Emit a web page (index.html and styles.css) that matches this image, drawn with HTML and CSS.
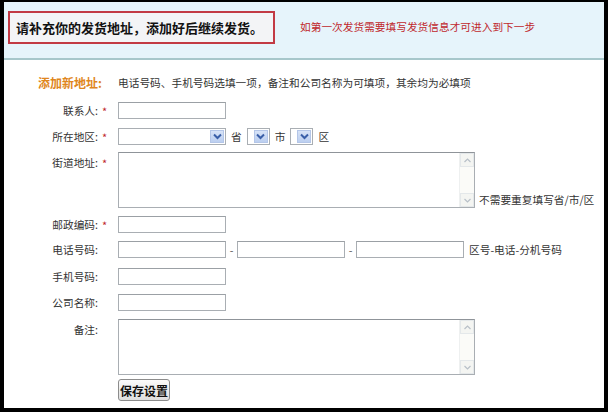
FILE: index.html
```html
<!DOCTYPE html>
<html lang="zh-CN">
<head>
<meta charset="utf-8">
<title>发货地址</title>
<link rel="stylesheet" href="styles.css">
</head>
<body>
<div class="frame">
  <div class="header">
    <div class="notice">请补充你的发货地址，添加好后继续发货。</div>
    <div class="hint">如第一次发货需要填写发货信息才可进入到下一步</div>
  </div>
  <div class="form">
    <div class="row head-row">
      <div class="label heading">添加新地址:</div>
      <div class="star"></div>
      <div class="field desc">电话号码、手机号码选填一项，备注和公司名称为可填项，其余均为必填项</div>
    </div>

    <div class="row gap9">
      <div class="label">联系人:</div>
      <div class="star">*</div>
      <div class="field"><input class="text" type="text"></div>
    </div>

    <div class="row gap7">
      <div class="label">所在地区:</div>
      <div class="star">*</div>
      <div class="field">
        <span class="select wide"><span class="arrow"><svg width="9" height="7" viewBox="0 0 9 7"><path d="M1 1.5 L4.5 5 L8 1.5" fill="none" stroke="#3a5fa8" stroke-width="2"/></svg></span></span>
        <span class="unit">省</span>
        <span class="select small"><span class="arrow"><svg width="9" height="7" viewBox="0 0 9 7"><path d="M1 1.5 L4.5 5 L8 1.5" fill="none" stroke="#3a5fa8" stroke-width="2"/></svg></span></span>
        <span class="unit">市</span>
        <span class="select small"><span class="arrow"><svg width="9" height="7" viewBox="0 0 9 7"><path d="M1 1.5 L4.5 5 L8 1.5" fill="none" stroke="#3a5fa8" stroke-width="2"/></svg></span></span>
        <span class="unit">区</span>
      </div>
    </div>

    <div class="row top">
      <div class="label">街道地址:</div>
      <div class="star">*</div>
      <div class="field bottom">
        <div class="area">
          <div class="area-body"></div>
          <div class="scroll">
            <span class="sbtn"><svg width="7" height="5" viewBox="0 0 7 5"><path d="M0.5 4 L3.5 1 L6.5 4" fill="none" stroke="#b8c0c8" stroke-width="1.2"/></svg></span>
            <span class="sbtn"><svg width="7" height="5" viewBox="0 0 7 5"><path d="M0.5 1 L3.5 4 L6.5 1" fill="none" stroke="#b8c0c8" stroke-width="1.2"/></svg></span>
          </div>
        </div>
        <span class="note">不需要重复填写省/市/区</span>
      </div>
    </div>

    <div class="row">
      <div class="label">邮政编码:</div>
      <div class="star">*</div>
      <div class="field"><input class="text" type="text"></div>
    </div>

    <div class="row gap10">
      <div class="label">电话号码:</div>
      <div class="star"></div>
      <div class="field">
        <input class="text" type="text">
        <span class="dash">-</span>
        <input class="text" type="text">
        <span class="dash">-</span>
        <input class="text" type="text">
        <span class="note2">区号-电话-分机号码</span>
      </div>
    </div>

    <div class="row gap9">
      <div class="label">手机号码:</div>
      <div class="star"></div>
      <div class="field"><input class="text" type="text"></div>
    </div>

    <div class="row">
      <div class="label">公司名称:</div>
      <div class="star"></div>
      <div class="field"><input class="text" type="text"></div>
    </div>

    <div class="row top gap4">
      <div class="label">备注:</div>
      <div class="star"></div>
      <div class="field">
        <div class="area">
          <div class="area-body"></div>
          <div class="scroll">
            <span class="sbtn"><svg width="7" height="5" viewBox="0 0 7 5"><path d="M0.5 4 L3.5 1 L6.5 4" fill="none" stroke="#b8c0c8" stroke-width="1.2"/></svg></span>
            <span class="sbtn"><svg width="7" height="5" viewBox="0 0 7 5"><path d="M0.5 1 L3.5 4 L6.5 1" fill="none" stroke="#b8c0c8" stroke-width="1.2"/></svg></span>
          </div>
        </div>
      </div>
    </div>

    <div class="row">
      <div class="label"></div>
      <div class="star"></div>
      <div class="field"><button class="save" type="button">保存设置</button></div>
    </div>
  </div>
</div>
</body>
</html>
```

FILE: styles.css
```css
html, body {
  margin: 0;
  padding: 0;
  background: #000;
}
body {
  font-family: "Noto Sans CJK SC", "Liberation Sans", sans-serif;
  font-size: 11px;
  color: #333;
}
.frame {
  margin: 2px 4px 0 4px;
  height: 406px;
  background: #fff;
  overflow: hidden;
}
.header {
  height: 58px;
  background: #e6f4fb;
  border-bottom: 2px solid #a7c7cb;
  display: flex;
  align-items: flex-start;
  padding: 9px 0 0 4px;
  box-sizing: border-box;
}
.notice {
  box-sizing: border-box;
  width: 267px;
  height: 33px;
  border: 2px solid #c23a44;
  background: #f3f4f6;
  font-size: 13px;
  font-weight: bold;
  color: #111;
  display: flex;
  align-items: center;
  padding-left: 6px;
}
.hint {
  margin: 8px 0 0 25px;
  font-size: 10.7px;
  color: #c0282d;
}
.form {
  padding-top: 14px;
}
.row {
  display: flex;
  align-items: center;
  min-height: 17px;
  margin-bottom: 8px;
}
.row.gap4 { margin-bottom: 4px; }
.row.gap7 { margin-bottom: 7px; }
.row.gap9 { margin-bottom: 9px; }
.row.gap10 { margin-bottom: 10px; }
.row.top {
  align-items: flex-start;
}
.head-row {
  margin-bottom: 11px;
}
.label {
  width: 94px;
  flex: none;
  text-align: right;
  font-size: 10.7px;
  color: #333;
  white-space: nowrap;
}
.row.top .label, .row.top .star {
  padding-top: 3px;
}
.heading {
  color: #e0861c;
  font-weight: bold;
  font-size: 12px;
  width: 98px;
  text-align: right;
}
.head-row .star {
  width: 16px;
}
.star {
  width: 20px;
  flex: none;
  color: #c0282d;
  font-size: 11px;
  padding-left: 4px;
  box-sizing: border-box;
}
.field {
  display: flex;
  align-items: center;
  font-size: 10.7px;
}
.field.bottom {
  align-items: flex-end;
}
.desc {
  color: #333;
}
.text {
  box-sizing: border-box;
  width: 108px;
  height: 17px;
  border: 1px solid #a9aeb3;
  border-top-color: #9ba0a5;
  background: #fff;
  margin: 0;
  padding: 0;
  font-size: 11px;
}
.select {
  box-sizing: border-box;
  height: 17px;
  border: 1px solid #a9aeb3;
  background: #fff;
  display: flex;
  justify-content: flex-end;
  align-items: stretch;
  padding: 1px;
}
.select.wide { width: 108px; }
.select.small { width: 23px; }
.arrow {
  width: 14px;
  background: linear-gradient(#d7e3f7, #bccff0);
  border: 1px solid #b4c6e8;
  box-sizing: border-box;
  display: flex;
  align-items: center;
  justify-content: center;
}
.unit {
  padding: 0 5px;
  color: #333;
}
.area {
  box-sizing: border-box;
  width: 357px;
  height: 56px;
  border: 1px solid #a9aeb3;
  border-top-color: #8f9499;
  display: flex;
  background: #fff;
}
.area-body {
  flex: 1;
}
.scroll {
  width: 14px;
  background: #fbfbf8;
  border-left: 1px solid #eef0f0;
  display: flex;
  flex-direction: column;
  justify-content: space-between;
}
.sbtn {
  height: 14px;
  display: flex;
  align-items: center;
  justify-content: center;
  background: #f4f5f2;
  border: 1px solid #e4e8ea;
  box-sizing: border-box;
}
.note {
  margin-left: 4px;
  margin-bottom: 1px;
  color: #333;
}
.dash {
  width: 11px;
  text-align: center;
  color: #555;
}
.note2 {
  margin-left: 5px;
  color: #333;
}
.save {
  box-sizing: border-box;
  width: 52px;
  height: 22px;
  border: 1px solid #8c8c8c;
  border-radius: 3px;
  background: linear-gradient(#fbfbfb, #dedede);
  font-family: "Noto Sans CJK SC", sans-serif;
  font-size: 12px;
  font-weight: bold;
  color: #111;
  padding: 0;
  margin: 0;
}
```
